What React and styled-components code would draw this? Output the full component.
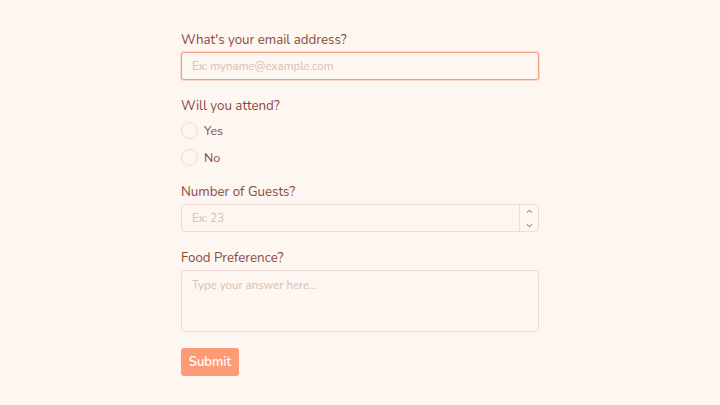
import React from "react";
import styled, { createGlobalStyle } from "styled-components";

const Global = createGlobalStyle`
	body {
		margin: 0;
		background: #fdf6f1;
		font-family: "Nunito", Lato, "Noto Sans", sans-serif;
	}
`;

const Page = styled.div`
	width: 720px;
	height: 405px;
	display: flex;
	justify-content: center;
	padding-top: 31px;
	box-sizing: border-box;
`;

const Form = styled.form`
	width: 358px;
	display: flex;
	flex-direction: column;
`;

const Field = styled.div`
	display: flex;
	flex-direction: column;
	margin-bottom: ${p => p.gap || 17}px;
`;

const Label = styled.label`
	font-size: 13.3px;
	color: #8b4a3c;
	line-height: 18px;
	margin-bottom: ${p => p.tight ? 2 : 3}px;
`;

const Input = styled.input`
	height: 28px;
	box-sizing: border-box;
	border: 1px solid ${p => (p.focused ? "#f39f7e" : "#f0dcd4")};
	box-shadow: ${p => (p.focused ? "0 0 0 1px #fcd9cb" : "none")};
	border-radius: 3px;
	background: #fdf6f1;
	padding: 0 10px;
	font-family: inherit;
	font-size: 11.5px;
	color: #8b4a3c;
	outline: none;
	width: 100%;
	&::placeholder {
		color: #dcbcb2;
	}
`;

const NumberWrap = styled.div`
	display: flex;
	height: 28px;
	border: 1px solid #f0dcd4;
	border-radius: 3px;
	box-sizing: border-box;
	${Input} {
		border: none;
		height: 26px;
		flex: 1;
	}
`;

const Spinner = styled.div`
	width: 18px;
	border-left: 1px solid #f0dcd4;
	display: flex;
	flex-direction: column;
	align-items: center;
	justify-content: center;
	gap: 9px;
`;

const TextArea = styled.textarea`
	height: 62px;
	box-sizing: border-box;
	border: 1px solid #f0dcd4;
	border-radius: 3px;
	background: #fdf6f1;
	padding: 6px 10px;
	font-family: inherit;
	font-size: 11.5px;
	resize: none;
	outline: none;
	&::placeholder {
		color: #dcbcb2;
	}
`;

const RadioRow = styled.label`
	display: flex;
	align-items: center;
	gap: 6px;
	height: 27px;
	font-size: 12.5px;
	color: #8b4a3c;
`;

const Circle = styled.span`
	width: 15px;
	height: 15px;
	border-radius: 50%;
	border: 1px solid #f3dcd5;
	background: #fdf6f1;
`;

const Button = styled.button`
	align-self: flex-start;
	background: #fd9b77;
	color: #fff;
	border: none;
	border-radius: 3px;
	width: 58px;
	height: 28px;
	font-family: inherit;
	font-size: 13px;
	font-weight: 600;
	cursor: pointer;
`;

const Chevron = ({ up }) => (
	<svg width="7" height="5" viewBox="0 0 8 5">
		<path
			d={up ? "M1 4 L4 1 L7 4" : "M1 1 L4 4 L7 1"}
			fill="none"
			stroke="#b58a7e"
			strokeWidth="1.2"
		/>
	</svg>
);

const App = () => (
	<Page>
		<Global />
		<Form>
			<Field>
				<Label>What's your email address?</Label>
				<Input focused placeholder="Ex: myname@example.com" />
			</Field>
			<Field gap={12}>
				<Label tight>Will you attend?</Label>
				<RadioRow>
					<Circle />
					Yes
				</RadioRow>
				<RadioRow>
					<Circle />
					No
				</RadioRow>
			</Field>
			<Field>
				<Label>Number of Guests?</Label>
				<NumberWrap>
					<Input placeholder="Ex: 23" />
					<Spinner>
						<Chevron up />
						<Chevron />
					</Spinner>
				</NumberWrap>
			</Field>
			<Field gap={16}>
				<Label>Food Preference?</Label>
				<TextArea placeholder="Type your answer here..." />
			</Field>
			<Button type="button">Submit</Button>
		</Form>
	</Page>
);

export default App;
